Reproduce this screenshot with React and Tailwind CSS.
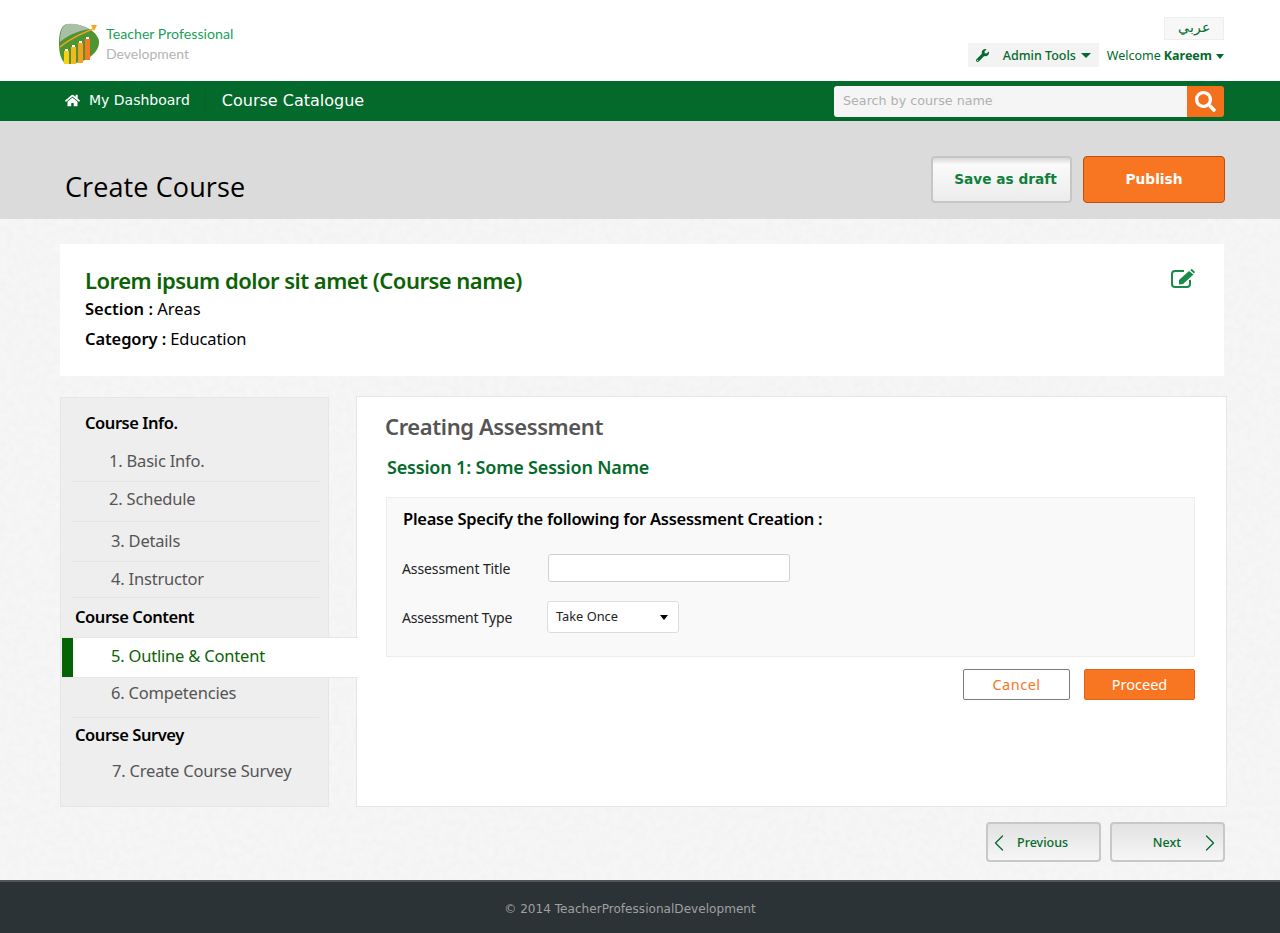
import { FaHome, FaWrench, FaSearch } from "react-icons/fa";
import { FiChevronLeft, FiChevronRight } from "react-icons/fi";

const sideItems = [
  { label: "Course Info.", type: "heading", height: "h-[45px]", indent: "pl-[24px]", pad: "pt-[5px]" },
  { label: "1. Basic Info.", height: "h-[39px]", indent: "pl-[48px]", pad: "pb-[2px]", line: true },
  { label: "2. Schedule", height: "h-[40px]", indent: "pl-[48px]", pad: "pb-[5px]", line: true },
  { label: "3. Details", height: "h-[40px]", indent: "pl-[50px]", pad: "pb-[2px]", line: true },
  { label: "4. Instructor", height: "h-[36px]", indent: "pl-[50px]", pad: "pb-[2px]", line: true },
  { label: "Course Content", type: "heading", height: "h-[39px]", indent: "pl-[14px]", pad: "pb-[1px]" },
  { label: "5. Outline & Content", type: "active", height: "h-[41px]", indent: "pl-[49px]", pad: "pb-[3px]" },
  { label: "6. Competencies", height: "h-[40px]", indent: "pl-[50px]", pad: "pb-[9px]", line: true },
  { label: "Course Survey", type: "heading", height: "h-[36px]", indent: "pl-[14px]", pad: "pb-[1px]" },
  { label: "7. Create Course Survey", height: "h-[37px]", indent: "pl-[51px]", pad: "pb-[2px]" },
];

function Caret({ className }) {
  return <span className={`inline-block h-0 w-0 border-x-[4px] border-t-[5px] border-x-transparent ${className}`} />;
}

function Logo() {
  return (
    <div className="flex items-start">
      <svg width="42" height="42" viewBox="0 0 42 42">
        <path d="M8 1 C20 0 38 6 40 18 C41 30 26 40 10 41 C2 41 0 30 0 20 C0 10 2 2 8 1Z" fill="#4f9433" />
        <path d="M8 1 C16 0 24 2 30 6 C18 8 8 13 1 19 C1 10 3 2 8 1Z" fill="#a9bfa6" />
        <path d="M1 24 C10 16 22 11 36 5" stroke="#f6a623" strokeWidth="1.5" fill="none" />
        <path d="M32 2 L38 2 L35 8Z" fill="#f6a623" />
        <rect x="5" y="28" width="5" height="13" fill="#f8d20e" />
        <rect x="12" y="24" width="5" height="17" fill="#f6b81a" />
        <rect x="19" y="20" width="5" height="20" fill="#f6a020" />
        <rect x="26" y="16" width="5" height="21" fill="#f57a20" />
        <rect x="6" y="26" width="3" height="2" fill="#ffffff" />
        <rect x="13" y="22" width="3" height="2" fill="#ffffff" />
        <rect x="20" y="18" width="3" height="2" fill="#ffffff" />
        <rect x="27" y="14" width="3" height="2" fill="#ffffff" />
      </svg>
      <div className="ml-[5px] mt-[1px] font-['Lato',sans-serif]">
        <div className="text-[14.2px] leading-[20px] text-[#1ba05a]">Teacher Professional</div>
        <div className="text-[14px] leading-[19px] text-[#b4b4b4]">Development</div>
      </div>
    </div>
  );
}

function EditIcon() {
  return (
    <svg className="absolute right-[29px] top-[25px]" width="24" height="20" viewBox="0 0 24 20">
      <path d="M13 2 H4 a3 3 0 0 0 -3 3 v10 a3 3 0 0 0 3 3 h12 a3 3 0 0 0 3 -3 v-4" fill="none" stroke="#1a8a4a" strokeWidth="2" />
      <path d="M8 11 L18 2 L22.500 5.500 L12 15 L8 15.500 Z" fill="#1a8a4a" />
      <path d="M19 1 L21 0 L24 3 L23 4.500Z" fill="#1a8a4a" />
    </svg>
  );
}

function PaperTexture() {
  return (
    <svg className="absolute inset-0 -z-10 h-full w-full">
      <filter id="paper">
        <feTurbulence type="fractalNoise" baseFrequency="0.15" numOctaves="3" />
        <feColorMatrix values="0 0 0 0 0.5 0 0 0 0 0.5 0 0 0 0 0.5 0.12 0 0 0 -0.04" />
      </filter>
      <rect width="100%" height="100%" filter="url(#paper)" />
    </svg>
  );
}

function Header() {
  return (
    <header className="flex h-[81px] justify-between bg-white pl-[59px] pr-[56px]">
      <div className="pt-[23px]">
        <Logo />
      </div>
      <div className="flex flex-col items-end pt-[17px]">
        <div className="flex h-[23px] w-[60px] items-center justify-center border border-[#eeeeee] bg-[#f7f7f7] pb-[4px] text-[14px] text-[#036a2b]">
          عربي
        </div>
        <div className="mt-[3px] flex items-center text-[12.5px] text-[#036a2b]">
          <div className="flex h-[24px] w-[131px] items-center bg-[#f3f3f3] pl-[8px]">
            <FaWrench className="h-[13px] w-[13px]" />
            <span className="ml-[14px] pt-[3px] font-medium">Admin Tools</span>
            <Caret className="ml-[5px] border-x-[5px] border-t-[#036a2b]" />
          </div>
          <span className="ml-[8px] pt-[3px]">Welcome</span>
          <span className="ml-[3px] pt-[3px] font-bold">Kareem</span>
          <Caret className="ml-[4px] mt-[2px] border-t-[#036a2b]" />
        </div>
      </div>
    </header>
  );
}

function NavBar() {
  return (
    <nav className="flex h-[40px] items-center justify-between bg-[#036a2b] pl-[65px] pr-[56px] font-['DejaVu_Sans',sans-serif] text-white">
      <div className="flex items-center">
        <FaHome className="mb-[2px] h-[15px] w-[15px]" />
        <span className="mb-[2px] ml-[9px] mr-[15px] text-[14px]">My Dashboard</span>
        <span className="h-[29px] w-px bg-[#0a5f2a]" />
        <span className="ml-[16px] text-[16px]">Course Catalogue</span>
      </div>
      <div className="flex h-[31px] w-[390px] overflow-hidden rounded-[3px]">
        <div className="flex flex-1 items-center bg-[#f5f5f5] pl-[9px] text-[12.7px] text-[#b0b0b0]">Search by course name</div>
        <div className="flex w-[37px] items-center justify-center bg-[#f3711d]">
          <FaSearch className="h-[21px] w-[21px] text-white" />
        </div>
      </div>
    </nav>
  );
}

function TitleBand() {
  return (
    <div className="flex h-[98px] justify-between bg-[#dbdbdb] pl-[65px] pr-[55px]">
      <h1 className="pt-[46px] font-['Open_Sans',sans-serif] text-[27px] leading-[40px] tracking-[0.1px] text-black">Create Course</h1>
      <div className="flex gap-[11px] pt-[35px] font-['DejaVu_Sans',sans-serif] text-[13.7px] font-bold">
        <button className="h-[47px] w-[141px] rounded-[4px] border-2 border-[#c6c6c6] bg-gradient-to-b from-[#d8d8d8] via-[#fafafa] via-15% to-[#ececec] pl-[8px] text-[#10803c]">
          Save as draft
        </button>
        <button className="h-[47px] w-[142px] rounded-[4px] border border-[#b9500f] bg-[#f87622] text-white">Publish</button>
      </div>
    </div>
  );
}

function CourseCard() {
  return (
    <section className="relative mt-[25px] h-[132px] w-[1164px] bg-white pl-[25px] pt-[22px] text-black">
      <h2 className="text-[22px] font-semibold leading-[28px] tracking-[-0.52px] text-[#0c6305]">Lorem ipsum dolor sit amet (Course name)</h2>
      <p className="text-[16.5px] leading-[30px]"><span className="font-semibold">Section :</span> Areas</p>
      <p className="text-[16.5px] leading-[30px] tracking-[-0.1px]"><span className="font-semibold">Category :</span> Education</p>
      <EditIcon />
    </section>
  );
}

function SideItem({ item }) {
  if (item.type === "active") {
    return (
      <div className={`relative z-10 ml-px flex w-[296px] items-center border-y border-[#e6e6e6] bg-white text-[16.5px] tracking-[-0.2px] text-[#0c6305] ${item.height} ${item.indent} ${item.pad}`}>
        <span className="absolute inset-y-0 left-0 w-[11px] bg-[#036305]" />
        {item.label}
      </div>
    );
  }
  if (item.type === "heading") {
    return <div className={`flex items-center text-[16.5px] font-semibold tracking-[-0.45px] text-black ${item.height} ${item.indent} ${item.pad}`}>{item.label}</div>;
  }
  return (
    <div className={`relative flex items-center text-[16.5px] tracking-[-0.2px] text-[#555555] ${item.height} ${item.indent} ${item.pad}`}>
      {item.label}
      {item.line && <span className="absolute bottom-0 left-[10px] h-px w-[248px] bg-[#e4e4e4]" />}
    </div>
  );
}

function Sidebar() {
  return (
    <aside className="mt-px h-[410px] w-[269px] border border-[#e6e6e6] bg-[#eeeeee]">
      {sideItems.map((item) => (
        <SideItem key={item.label} item={item} />
      ))}
    </aside>
  );
}

function AssessmentPanel() {
  return (
    <section className="ml-[27px] h-[411px] w-[871px] border border-[#e6e6e6] bg-white pl-[28px]">
      <h3 className="pt-[12px] text-[22px] font-semibold leading-[34px] tracking-[-0.4px] text-[#555555]">Creating Assessment</h3>
      <h4 className="ml-[2px] pt-[9px] text-[18px] font-semibold leading-[30px] tracking-[-0.18px] text-[#036a2b]">Session 1: Some Session Name</h4>
      <div className="ml-px mt-[15px] h-[160px] w-[809px] border border-[#eeeeee] bg-[#f9f9f9] pl-[15px]">
        <p className="pl-px pt-[7px] text-[16.5px] font-semibold leading-[28px] tracking-[-0.26px] text-black">Please Specify the following for Assessment Creation :</p>
        <div className="mt-[21px] flex items-center">
          <span className="w-[146px] text-[14px] tracking-[-0.1px] text-[#222222]">Assessment Title</span>
          <input className="h-[28px] w-[242px] rounded-[3px] border border-[#d2d2d2] bg-white" />
        </div>
        <div className="mt-[19px] flex items-center">
          <span className="w-[145px] text-[14px] tracking-[-0.2px] text-[#222222]">Assessment Type</span>
          <div className="flex h-[32px] w-[132px] items-center justify-between rounded-[3px] border border-[#dcdcdc] bg-white px-[8px] text-[12.8px] text-[#222222]">
            Take Once
            <Caret className="mr-[2px] border-t-black" />
          </div>
        </div>
      </div>
      <div className="ml-px mt-[12px] flex w-[809px] justify-end gap-[14px] text-[14.5px]">
        <button className="h-[31px] w-[107px] rounded-[2px] border border-[#7c7c7c] bg-white tracking-[0.5px] text-[#f87622]">Cancel</button>
        <button className="h-[31px] w-[111px] rounded-[2px] border border-[#e0661a] bg-[#f87622] text-white">Proceed</button>
      </div>
    </section>
  );
}

function Pager() {
  return (
    <div className="mt-[15px] flex w-[1165px] justify-end gap-[9px] text-[12.5px] font-medium text-[#036a2b]">
      <button className="flex h-[40px] w-[115px] items-center rounded-[4px] border-2 border-[#c8c8c8] bg-gradient-to-b from-[#e2e2e2] to-[#f6f6f6]">
        <FiChevronLeft strokeWidth={1.1} className="ml-[-3px] mt-[1px] h-[28px] w-[28px] shrink-0" />
        <span className="ml-[4px] pt-[3px]">Previous</span>
      </button>
      <button className="flex h-[40px] w-[115px] items-center justify-end rounded-[4px] border-2 border-[#c8c8c8] bg-gradient-to-b from-[#e2e2e2] to-[#f6f6f6]">
        <span className="mr-[15px] pt-[3px]">Next</span>
        <FiChevronRight strokeWidth={1.1} className="mr-[-1px] mt-[1px] h-[28px] w-[28px] shrink-0" />
      </button>
    </div>
  );
}

export default function App() {
  return (
    <div className="relative isolate flex h-[933px] flex-col overflow-hidden bg-[#f6f6f6] font-['Noto_Sans',sans-serif]">
      <PaperTexture />
      <Header />
      <NavBar />
      <TitleBand />
      <main className="flex-1 pl-[60px]">
        <CourseCard />
        <div className="mt-[20px] flex items-start">
          <Sidebar />
          <AssessmentPanel />
        </div>
        <Pager />
      </main>
      <footer className="h-[53px] border-t-2 border-[#50575a] bg-[#2c3337] pr-[20px] pt-[19px] text-center font-['DejaVu_Sans',sans-serif] text-[12.1px] leading-[16px] text-[#a0a0a0]">
        © 2014 TeacherProfessionalDevelopment
      </footer>
    </div>
  );
}
